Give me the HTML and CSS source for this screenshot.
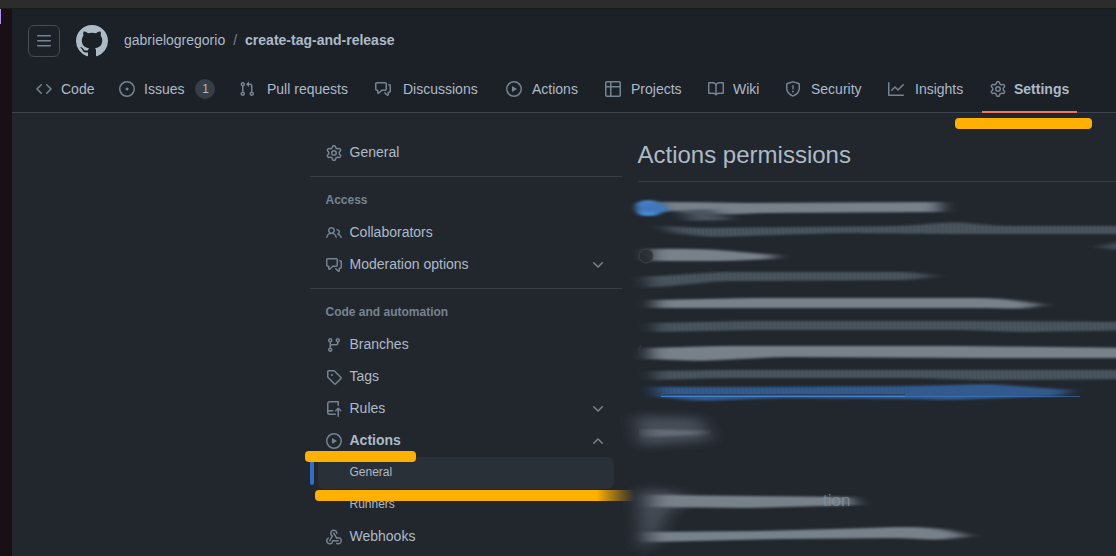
FILE: index.html
```html
<!DOCTYPE html>
<html lang="en">
<head>
<meta charset="utf-8">
<title>Actions settings</title>
<link rel="stylesheet" href="styles.css">
</head>
<body>
<svg class="defs" aria-hidden="true">
<symbol id="gear" viewBox="0 0 16 16"><path d="M8 0a8.2 8.2 0 0 1 .701.031C9.444.095 9.99.645 10.16 1.29l.288 1.107c.018.066.079.158.212.224.231.114.454.243.668.386.123.082.233.09.299.071l1.103-.303c.644-.176 1.392.021 1.82.63.27.385.506.792.704 1.218.315.675.111 1.422-.364 1.891l-.814.806c-.049.048-.098.147-.088.294.016.257.016.515 0 .772-.01.147.038.246.088.294l.814.806c.475.469.679 1.216.364 1.891a7.977 7.977 0 0 1-.704 1.217c-.428.61-1.176.807-1.82.63l-1.102-.302c-.067-.019-.177-.011-.3.071a5.909 5.909 0 0 1-.668.386c-.133.066-.194.158-.211.224l-.29 1.106c-.168.646-.715 1.196-1.458 1.26a8.006 8.006 0 0 1-1.402 0c-.743-.064-1.289-.614-1.458-1.26l-.289-1.106c-.018-.066-.079-.158-.212-.224a5.738 5.738 0 0 1-.668-.386c-.123-.082-.233-.09-.299-.071l-1.103.303c-.644.176-1.392-.021-1.82-.63a8.12 8.12 0 0 1-.704-1.218c-.315-.675-.111-1.422.363-1.891l.815-.806c.05-.048.098-.147.088-.294a6.214 6.214 0 0 1 0-.772c.01-.147-.038-.246-.088-.294l-.815-.806C.635 6.045.431 5.298.746 4.623a7.92 7.92 0 0 1 .704-1.217c.428-.61 1.176-.807 1.82-.63l1.102.302c.067.019.177.011.3-.071.214-.143.437-.272.668-.386.133-.066.194-.158.211-.224l.29-1.106C6.009.645 6.556.095 7.299.03 7.53.01 7.764 0 8 0Zm-.571 1.525c-.036.003-.108.036-.137.146l-.289 1.105c-.147.561-.549.967-.998 1.189-.173.086-.34.183-.5.29-.417.278-.97.423-1.529.27l-1.103-.303c-.109-.03-.175.016-.195.045-.22.312-.412.644-.573.99-.014.031-.021.11.059.19l.815.806c.411.406.562.957.53 1.456a4.709 4.709 0 0 0 0 .582c.032.499-.119 1.05-.53 1.456l-.815.806c-.081.08-.073.159-.059.19.162.346.353.677.573.989.02.03.085.076.195.046l1.102-.303c.56-.153 1.113-.008 1.53.27.161.107.328.204.501.29.447.222.85.629.997 1.189l.289 1.105c.029.109.101.143.137.146a6.6 6.6 0 0 0 1.142 0c.036-.003.108-.036.137-.146l.289-1.105c.147-.561.549-.967.998-1.189.173-.086.34-.183.5-.29.417-.278.97-.423 1.529-.27l1.103.303c.109.029.175-.016.195-.045.22-.313.411-.644.573-.99.014-.031.021-.11-.059-.19l-.815-.806c-.411-.406-.562-.957-.53-1.456a4.709 4.709 0 0 0 0-.582c-.032-.499.119-1.05.53-1.456l.815-.806c.081-.08.073-.159.059-.19a6.464 6.464 0 0 0-.573-.989c-.02-.03-.085-.076-.195-.046l-1.102.303c-.56.153-1.113.008-1.53-.27a4.44 4.44 0 0 0-.501-.29c-.447-.222-.85-.629-.997-1.189l-.289-1.105c-.029-.11-.101-.143-.137-.146a6.6 6.6 0 0 0-1.142 0ZM11 8a3 3 0 1 1-6 0 3 3 0 0 1 6 0ZM9.500 8a1.5 1.5 0 1 0-3.001.001A1.5 1.5 0 0 0 9.500 8Z"/></symbol>
<symbol id="discuss" viewBox="0 0 16 16"><path d="M1.750 1h8.500c.966 0 1.750.784 1.750 1.750v5.500A1.750 1.750 0 0 1 10.250 10H7.061l-2.574 2.573A1.458 1.458 0 0 1 2 11.543V10h-.25A1.750 1.750 0 0 1 0 8.250v-5.500C0 1.784.784 1 1.750 1ZM1.500 2.750v5.500c0 .138.112.250.250.250h1a.75.75 0 0 1 .750.750v2.190l2.720-2.720a.749.749 0 0 1 .530-.220h3.500a.25.25 0 0 0 .250-.250v-5.500a.25.25 0 0 0-.250-.250h-8.500a.25.25 0 0 0-.250.250Zm13 2a.25.25 0 0 0-.250-.250h-.500a.75.75 0 0 1 0-1.500h.500c.966 0 1.750.784 1.750 1.750v5.500A1.750 1.750 0 0 1 14.250 12H14v1.543a1.458 1.458 0 0 1-2.487 1.030L9.220 12.280a.75.75 0 0 1 1.060-1.060l2.220 2.220v-2.190a.75.75 0 0 1 .750-.750h1a.25.25 0 0 0 .250-.250Z"/></symbol>
<symbol id="play" viewBox="0 0 16 16"><path d="M8 0a8 8 0 1 1 0 16A8 8 0 0 1 8 0ZM1.500 8a6.500 6.500 0 1 0 13 0 6.500 6.500 0 0 0-13 0Zm4.879-2.773 4.264 2.559a.25.25 0 0 1 0 .428l-4.264 2.559A.25.25 0 0 1 6 10.559V5.442a.25.25 0 0 1 .379-.215Z"/></symbol>
<symbol id="down" viewBox="0 0 16 16"><path d="M12.780 5.220a.749.749 0 0 1 0 1.060l-4.250 4.250a.749.749 0 0 1-1.060 0L3.220 6.280a.749.749 0 1 1 1.060-1.060L8 8.939l3.720-3.719a.749.749 0 0 1 1.060 0Z"/></symbol>
</svg>

<div class="desktop-bar"></div>
<div class="window">
  <aside class="dock"><div class="dock-mark"></div></aside>
  <div class="page">
    <header class="header">
      <div class="crumbs">
        <button class="menu" aria-label="Menu"><svg class="icon" viewBox="0 0 16 16"><path d="M1 2.750A.75.75 0 0 1 1.750 2h12.500a.75.75 0 0 1 0 1.500H1.750A.75.75 0 0 1 1 2.750Zm0 5A.75.75 0 0 1 1.750 7h12.500a.75.75 0 0 1 0 1.500H1.750A.75.75 0 0 1 1 7.750ZM1.750 12h12.500a.75.75 0 0 1 0 1.500H1.750a.75.75 0 0 1 0-1.500Z"/></svg></button>
        <svg class="mark" viewBox="0 0 16 16"><path d="M8 0c4.420 0 8 3.580 8 8a8.013 8.013 0 0 1-5.450 7.590c-.4.080-.55-.17-.55-.38 0-.27.010-1.130.010-2.200 0-.75-.25-1.230-.54-1.480 1.780-.2 3.650-.88 3.650-3.950 0-.88-.31-1.590-.82-2.150.08-.2.360-1.020-.08-2.120 0 0-.67-.22-2.200.82-.64-.18-1.320-.27-2-.27-.68 0-1.360.09-2 .27-1.530-1.030-2.200-.82-2.200-.82-.44 1.100-.16 1.920-.08 2.120-.51.560-.82 1.280-.82 2.150 0 3.060 1.860 3.750 3.640 3.950-.23.200-.44.550-.51 1.070-.46.210-1.610.550-2.330-.66-.15-.24-.6-.83-1.230-.82-.67.010-.27.380.010.530.340.190.730.900.820 1.130.160.450.680 1.310 2.690.940 0 .670.010 1.300.010 1.490 0 .210-.15.450-.55.380A7.995 7.995 0 0 1 0 8c0-4.420 3.580-8 8-8Z"/></svg>
        <span>gabrielogregorio</span><span class="slash">/</span><strong>create-tag-and-release</strong>
      </div>
      <nav class="tabs">
        <a class="tab code"><svg class="icon" viewBox="0 0 16 16"><path d="m11.280 3.220 4.250 4.250a.75.75 0 0 1 0 1.060l-4.250 4.250a.749.749 0 1 1-1.060-1.060L13.940 8l-3.720-3.720a.749.749 0 1 1 1.060-1.060Zm-6.560 0a.749.749 0 1 1 1.060 1.060L2.060 8l3.720 3.720a.749.749 0 1 1-1.060 1.060L.470 8.530a.75.75 0 0 1 0-1.060Z"/></svg><span>Code</span></a>
        <a class="tab issues"><svg class="icon" viewBox="0 0 16 16"><path d="M8 9.500a1.500 1.500 0 1 0 0-3 1.500 1.500 0 0 0 0 3Z"/><path d="M8 0a8 8 0 1 1 0 16A8 8 0 0 1 8 0ZM1.500 8a6.500 6.500 0 1 0 13 0 6.500 6.500 0 0 0-13 0Z"/></svg><span>Issues</span><span class="count">1</span></a>
        <a class="tab pulls"><svg class="icon" viewBox="0 0 16 16"><path d="M1.500 3.250a2.250 2.250 0 1 1 3 2.122v5.256a2.251 2.251 0 1 1-1.500 0V5.372A2.250 2.250 0 0 1 1.500 3.250Zm5.677-.177L9.573.677A.25.25 0 0 1 10 .854V2.500h1A2.500 2.500 0 0 1 13.500 5v5.628a2.251 2.251 0 1 1-1.500 0V5a1 1 0 0 0-1-1h-1v1.646a.25.25 0 0 1-.427.177L7.177 3.427a.25.25 0 0 1 0-.354ZM3.750 2.500a.75.75 0 1 0 0 1.500.75.75 0 0 0 0-1.500Zm0 9.500a.75.75 0 1 0 0 1.500.75.75 0 0 0 0-1.500Zm8.250.750a.75.75 0 1 0 1.500 0 .75.75 0 0 0-1.500 0Z"/></svg><span>Pull requests</span></a>
        <a class="tab discussions"><svg class="icon"><use href="#discuss"/></svg><span>Discussions</span></a>
        <a class="tab actions"><svg class="icon"><use href="#play"/></svg><span>Actions</span></a>
        <a class="tab projects"><svg class="icon" viewBox="0 0 16 16"><path d="M0 1.750C0 .784.784 0 1.750 0h12.500C15.216 0 16 .784 16 1.750v12.500A1.750 1.750 0 0 1 14.250 16H1.750A1.750 1.750 0 0 1 0 14.250ZM6.500 6.500v8h7.750a.25.25 0 0 0 .250-.250V6.500Zm8-1.500V1.750a.25.25 0 0 0-.250-.250H6.500V5Zm-13 1.500v7.750c0 .138.112.250.250.250H5v-8ZM5 5V1.500H1.750a.25.25 0 0 0-.250.250V5Z"/></svg><span>Projects</span></a>
        <a class="tab wiki"><svg class="icon" viewBox="0 0 16 16"><path d="M0 1.750A.75.75 0 0 1 .750 1h4.253c1.227 0 2.317.590 3 1.501A3.743 3.743 0 0 1 11.006 1h4.245a.75.75 0 0 1 .750.750v10.500a.75.75 0 0 1-.750.750h-4.507a2.250 2.250 0 0 0-1.591.659l-.622.621a.75.75 0 0 1-1.060 0l-.622-.621A2.250 2.250 0 0 0 5.258 13H.750a.75.75 0 0 1-.750-.750Zm7.251 10.324.004-5.073-.002-2.253A2.250 2.250 0 0 0 5.003 2.500H1.500v9h3.757a3.750 3.750 0 0 1 1.994.574ZM8.755 4.750l-.004 7.322a3.752 3.752 0 0 1 1.992-.572H14.500v-9h-3.495a2.250 2.250 0 0 0-2.250 2.250Z"/></svg><span>Wiki</span></a>
        <a class="tab security"><svg class="icon" viewBox="0 0 16 16"><path d="M7.467.133a1.748 1.748 0 0 1 1.066 0l5.250 1.680A1.750 1.750 0 0 1 15 3.480V7c0 1.566-.320 3.182-1.303 4.682-.983 1.498-2.585 2.813-5.032 3.855a1.697 1.697 0 0 1-1.330 0c-2.447-1.042-4.049-2.357-5.032-3.855C1.320 10.182 1 8.566 1 7V3.480a1.750 1.750 0 0 1 1.217-1.667Zm.610 1.429a.25.25 0 0 0-.153 0l-5.250 1.680a.25.25 0 0 0-.174.238V7c0 1.358.275 2.666 1.057 3.860.784 1.194 2.121 2.340 4.366 3.297a.196.196 0 0 0 .154 0c2.245-.956 3.582-2.104 4.366-3.298C13.225 9.666 13.500 8.360 13.500 7V3.480a.251.251 0 0 0-.174-.237l-5.250-1.680ZM8.750 4.750v3a.75.75 0 0 1-1.500 0v-3a.75.75 0 0 1 1.500 0ZM9 10.500a1 1 0 1 1-2 0 1 1 0 0 1 2 0Z"/></svg><span>Security</span></a>
        <a class="tab insights"><svg class="icon" viewBox="0 0 16 16"><path d="M1.500 1.750V13.500h13.750a.75.75 0 0 1 0 1.500H.750a.75.75 0 0 1-.750-.750V1.750a.75.75 0 0 1 1.500 0Zm14.280 2.530-5.250 5.250a.75.75 0 0 1-1.060 0L7 7.060 4.280 9.780a.749.749 0 1 1-1.060-1.060l3.250-3.250a.75.75 0 0 1 1.060 0L10 7.940l4.720-4.720a.749.749 0 1 1 1.060 1.060Z"/></svg><span>Insights</span></a>
        <a class="tab settings"><svg class="icon"><use href="#gear"/></svg><span>Settings</span></a>
      </nav>
    </header>
    <div class="content">
      <nav class="sidebar">
        <a class="row"><svg class="icon"><use href="#gear"/></svg><span>General</span></a>
        <hr>
        <h3>Access</h3>
        <a class="row"><svg class="icon" viewBox="0 0 16 16"><path d="M2 5.500a3.500 3.500 0 1 1 5.898 2.549 5.508 5.508 0 0 1 3.034 4.084.75.75 0 1 1-1.482.235 4 4 0 0 0-7.900 0 .75.75 0 0 1-1.482-.236A5.507 5.507 0 0 1 3.102 8.050 3.493 3.493 0 0 1 2 5.500ZM11 4a3.001 3.001 0 0 1 2.220 5.018 5.010 5.010 0 0 1 2.560 3.012.749.749 0 0 1-.885.954.752.752 0 0 1-.549-.514 3.507 3.507 0 0 0-2.522-2.372.75.75 0 0 1-.574-.730v-.352a.75.75 0 0 1 .416-.672A1.500 1.500 0 0 0 11 5.500.75.75 0 0 1 11 4Zm-5.500-.500a2 2 0 1 0-.001 3.999A2 2 0 0 0 5.500 3.500Z"/></svg><span>Collaborators</span></a>
        <a class="row"><svg class="icon"><use href="#discuss"/></svg><span>Moderation options</span><svg class="icon chevron"><use href="#down"/></svg></a>
        <hr>
        <h3>Code and automation</h3>
        <a class="row"><svg class="icon" viewBox="0 0 16 16"><path d="M9.500 3.250a2.250 2.250 0 1 1 3 2.122V6A2.500 2.500 0 0 1 10 8.500H6a1 1 0 0 0-1 1v1.128a2.251 2.251 0 1 1-1.500 0V5.372a2.250 2.250 0 1 1 1.500 0v1.836A2.493 2.493 0 0 1 6 7h4a1 1 0 0 0 1-1v-.628A2.250 2.250 0 0 1 9.500 3.250Zm-6 0a.75.75 0 1 0 1.500 0 .75.75 0 0 0-1.500 0Zm8.250-.750a.75.75 0 1 0 0 1.500.75.75 0 0 0 0-1.500ZM4.250 12a.75.75 0 1 0 0 1.500.75.75 0 0 0 0-1.500Z"/></svg><span>Branches</span></a>
        <a class="row"><svg class="icon" viewBox="0 0 16 16"><path d="M1 7.775V2.750C1 1.784 1.784 1 2.750 1h5.025c.464 0 .910.184 1.238.513l6.250 6.250a1.750 1.750 0 0 1 0 2.474l-5.026 5.026a1.750 1.750 0 0 1-2.474 0l-6.250-6.250A1.752 1.752 0 0 1 1 7.775Zm1.500 0c0 .066.026.130.073.177l6.250 6.250a.25.25 0 0 0 .354 0l5.025-5.025a.25.25 0 0 0 0-.354l-6.250-6.250a.25.25 0 0 0-.177-.073H2.750a.25.25 0 0 0-.250.250ZM6 5a1 1 0 1 1 0 2 1 1 0 0 1 0-2Z"/></svg><span>Tags</span></a>
        <a class="row"><svg class="icon" viewBox="0 0 16 16"><path d="M1 2.500A2.500 2.500 0 0 1 3.500 0h8.750a.75.75 0 0 1 .750.750v3.500a.75.75 0 0 1-1.500 0V1.500h-8a1 1 0 0 0-1 1v6.708A2.493 2.493 0 0 1 3.500 9h3.250a.75.75 0 0 1 0 1.500H3.500a1 1 0 0 0 0 2h5.750a.75.75 0 0 1 0 1.500H3.500A2.500 2.500 0 0 1 1 11.500Zm13.230 7.790-1.230-1.224v6.184a.75.75 0 0 1-1.500 0V9.066l-1.230 1.224a.749.749 0 1 1-1.060-1.060l2.505-2.504a.75.75 0 0 1 1.070 0l2.505 2.504a.749.749 0 1 1-1.060 1.060Z"/></svg><span>Rules</span><svg class="icon chevron"><use href="#down"/></svg></a>
        <a class="row open"><svg class="icon"><use href="#play"/></svg><span>Actions</span><svg class="icon chevron up"><use href="#down"/></svg></a>
        <a class="sub current"><span class="sub-box">General</span></a>
        <a class="sub"><span class="sub-box">Runners</span></a>
        <a class="row"><svg class="icon" viewBox="0 0 16 16"><path d="M5.500 4.250a2.250 2.250 0 0 1 4.500 0 .75.75 0 0 0 1.500 0 3.750 3.750 0 1 0-6.140 2.889l-2.272 4.258a.75.75 0 0 0 1.324.706L7 7.250a.75.75 0 0 0-.309-1.015A2.250 2.250 0 0 1 5.500 4.250Z"/><path d="M7.364 3.607a.75.75 0 0 1 1.030.257l2.608 4.349a3.750 3.750 0 1 1-.628 6.785.75.75 0 0 1 .752-1.299 2.250 2.250 0 1 0-.033-3.880.75.75 0 0 1-1.030-.256L7.107 4.636a.75.75 0 0 1 .257-1.029Z"/><path d="M2.900 8.776A.75.75 0 0 1 2.625 9.800 2.250 2.250 0 1 0 6 11.750a.75.75 0 0 1 .750-.751h5.500a.75.75 0 0 1 0 1.500H7.425a3.751 3.751 0 1 1-5.550-3.998.75.75 0 0 1 1.024.274Z"/></svg><span>Webhooks</span></a>
      </nav>
      <main class="main"><h1>Actions permissions</h1></main>
    </div>
  </div>
</div>

<svg class="annotations" viewBox="0 0 1116 556">
  <defs>
    <filter id="soft" x="-10%" y="-80%" width="120%" height="260%"><feGaussianBlur stdDeviation="9 1.3"/></filter>
    <filter id="dot" x="-50%" y="-50%" width="200%" height="200%"><feGaussianBlur stdDeviation="3 1"/></filter>
    <filter id="smoke" x="-40%" y="-60%" width="180%" height="220%"><feGaussianBlur stdDeviation="9 4"/></filter>
    <linearGradient id="trail"><stop offset="0" stop-color="#ffb000"/><stop offset=".88" stop-color="#ffb000"/><stop offset="1" stop-color="#ffb000" stop-opacity="0"/></linearGradient>
    <pattern id="grain" width="4" height="3" patternUnits="userSpaceOnUse"><path d="M0 0V3" stroke="#22272e" stroke-opacity=".22"/></pattern>
  </defs>
  <g class="smoke" filter="url(#smoke)">
    <path d="M635 416L700 418L712 440L640 446Z"/>
    <path d="M638 491Q675 487 690 500L668 513L656 540L642 552Z"/>
  </g>
  <g class="light" filter="url(#soft)">
    <path d="M655 202Q700 202 745 203L940 202L940 212L760 213Q710 216 690 212L655 210Z"/>
    <path d="M650 249Q700 248 730 251L775 255L772 259L725 261L650 261Z"/>
    <path d="M655 300L750 298L985 298Q1015 299 1042 305L1020 309L990 308L750 308L655 308Z"/>
    <path d="M650 348L720 346L960 346L1150 348V358H980L780 357L700 361L650 359Z"/>
    <path d="M655 495L750 496L850 497L856 505L750 508L655 507Z"/>
    <path d="M650 532L760 531L870 528Q930 525 955 532L968 536L940 540L900 538L780 539L650 542Z"/>
  </g>
  <g class="dim" filter="url(#soft)">
    <path d="M662 226L700 228L900 226L955 222L1000 226H1150V234H960L840 233L710 237L675 233Z"/>
    <path d="M645 277L720 272L910 272L935 276L910 280L720 281L650 288Z"/>
    <path d="M655 323L745 321L980 321L1150 322V330L1020 332L965 330L750 330L655 332Z"/>
    <path d="M655 371L720 370L1150 370V379L980 380L920 378L720 378L655 380Z"/>
    <path d="M1100 247L1130 240V251Z"/>
    <path d="M682 210L712 209L730 220L690 221Z"/>
  </g>
  <path class="mist" filter="url(#soft)" d="M645 429L705 431L695 435L648 437Z"/>
  <g class="blue" filter="url(#soft)">
    <path d="M655 387L760 387L910 386L990 384L1070 390L1060 396L950 400L910 399L780 398L700 401L660 397Z"/>
  </g>
  <path class="grain" d="M680 224H1116V235H680ZM670 271H940V282H670ZM670 320H1116V332H670ZM670 369H1116V380H670ZM650 385H910V394H650Z"/>
  <path class="blue-gap" d="M665 394.500H905"/>
  <path class="blue-line" d="M661 396.500H905"/>
  <path class="blue-line faint" d="M905 396.500H1080"/>
  <path class="radio-on" filter="url(#dot)" d="M638 203H662L670 210L656 215H640Z"/>
  <path class="radio-edge" filter="url(#dot)" d="M656 203C645 200 638 203 638 208C638 213 646 216 656 213"/>
  <circle class="radio-off" cx="646" cy="256" r="7"/>
  <path class="radio-trace" d="M641 345Q636 352 643 359"/>
  <text class="remnant" x="823" y="506">tion</text>
  <rect class="marker" x="955" y="118" width="137" height="11" rx="4"/>
  <rect class="marker" x="305" y="451" width="111" height="11" rx="4"/>
  <rect x="315" y="490" width="320" height="11" rx="4" fill="url(#trail)"/>
</svg>
</body>
</html>
```
FILE: styles.css
```css
* { box-sizing: border-box; }
body {
  margin: 0;
  width: 1116px;
  height: 556px;
  overflow: hidden;
  position: relative;
  background: #22272e;
  color: #adbac7;
  font: 14px/20px "Liberation Sans", Arial, sans-serif;
}
.defs { position: absolute; width: 0; height: 0; }
.icon { width: 16px; height: 16px; flex: none; fill: #768390; }
.desktop-bar { height: 9px; background: #2c2c2c; border-bottom: 1px solid #1b1b1b; }
.window { display: flex; height: 547px; }
.dock { width: 12px; flex: none; background: #1b0f16; }
.dock-mark { width: 1px; height: 15px; background: #b294f0; }
.page { flex: 1; min-width: 0; }
.header { height: 104px; background: #1c2128; border-bottom: 1px solid #3d444d; }
.crumbs { display: flex; align-items: center; height: 64px; padding-left: 16px; }
.crumbs span, .crumbs strong { padding-bottom: 2px; }
.menu {
  display: flex;
  align-items: center;
  justify-content: center;
  width: 32px;
  height: 32px;
  padding: 0;
  border: 1px solid #444c56;
  border-radius: 6px;
  background: none;
}
.mark { width: 32px; height: 32px; margin: 0 16px; fill: #adbac7; }
.slash { margin: 0 8px; color: #768390; }
.tabs { display: flex; height: 40px; padding-left: 24px; }
.tab { display: flex; flex: none; align-items: center; height: 32px; gap: 9px; }
.code { width: 83px; }
.issues { width: 120px; }
.pulls { width: 136px; gap: 12px; }
.discussions { width: 131px; gap: 12px; }
.actions { width: 99px; gap: 10px; }
.projects { width: 103px; gap: 10px; }
.wiki { width: 77px; }
.security { width: 103px; gap: 10px; }
.insights { width: 94px; gap: 11px; }
.settings {
  width: 95px;
  height: 40px;
  padding: 0 8px 6px;
  gap: 8px;
  border-bottom: 2px solid #ec775c;
  font-weight: 700;
}
.count {
  width: 20px;
  height: 20px;
  margin-left: 2px;
  border-radius: 10px;
  background: #373e47;
  font-size: 12px;
  text-align: center;
}
.content { display: flex; height: 443px; overflow: hidden; }
.sidebar { width: 312px; margin-left: 298px; padding-top: 23px; flex: none; }
.row { display: flex; align-items: center; gap: 7.5px; height: 32px; padding: 0 16px; }
.row .icon { position: relative; top: 1px; }
.row .chevron { margin-left: auto; }
.chevron.up { transform: rotate(180deg); }
.open { font-weight: 700; }
.sidebar hr { height: 1px; margin: 8px 0 7px; border: 0; background: #373e47; }
.sidebar h3 { margin: 0; padding-left: 15.5px; color: #768390; font-size: 12px; line-height: 32px; }
.sub { display: flex; height: 32px; padding-top: 1px; font-size: 12px; line-height: 31px; }
.sub-box { flex: 1; height: 32px; margin: 0 8px; padding-left: 31.5px; border-radius: 6px; }
.current { position: relative; }
.current::before { content: ""; position: absolute; left: 0; top: 5px; width: 4px; height: 24px; border-radius: 3px; background: #316dca; }
.current .sub-box { background: #2a3038; }
.main { flex: 1; margin-left: 15.5px; padding-top: 24px; }
.main h1 { margin: 0; height: 45px; border-bottom: 1px solid #373e47; font-size: 24px; font-weight: 400; line-height: 36px; }
.annotations { position: absolute; inset: 0; width: 1116px; height: 556px; }
.light { fill: #78808a; }
.dim { fill: #4a535d; }
.mist { fill: #646b75; }
.blue { fill: #315a8f; }
.blue-line { fill: none; stroke: #4382cb; stroke-width: 1; }
.faint { opacity: .55; }
.blue-gap { stroke: #29405f; }
.smoke { fill: #464e57; }
.grain { fill: url(#grain); }
.radio-on { fill: #3f78ba; }
.radio-edge { fill: none; stroke: #4b91df; stroke-width: 3; }
.radio-off { fill: #23272e; fill-opacity: .7; stroke: #3d434b; }
.radio-trace { fill: none; stroke: #343a43; }
.remnant { fill: #858e98; fill-opacity: .8; font: 17px "Liberation Sans", Arial, sans-serif; }
.marker { fill: #ffb000; }
```
